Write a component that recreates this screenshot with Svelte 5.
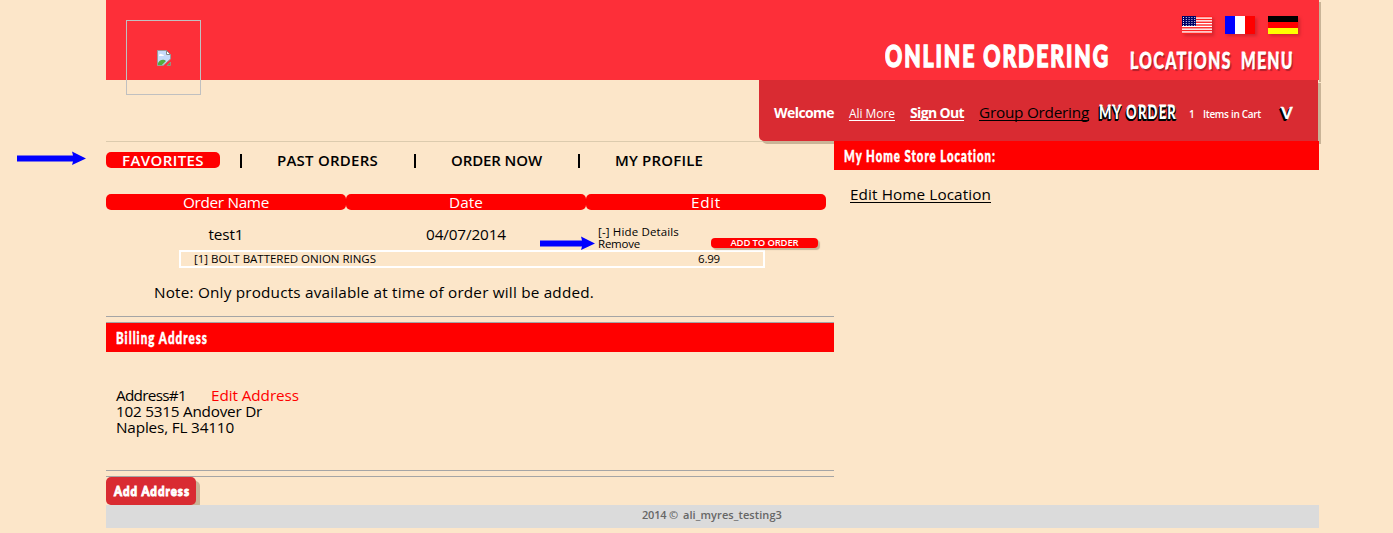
<script>
  // Tracks body text to a set measure by adjusting the letter spacing.
  function track(node, width) {
    const natural = node.getBoundingClientRect().width;
    node.style.letterSpacing = (width - natural) / node.textContent.length + 'px';
  }

  // Condenses display lettering horizontally to a set measure.
  function condense(node, width) {
    const natural = node.getBoundingClientRect().width;
    node.style.transform = `scaleX(${width / natural})`;
    node.style.marginRight = width - natural + 'px';
  }

  const stars = Array.from({ length: 25 }, (_, i) => ({
    x: 1 + (i % 5) * 2.8,
    y: 1 + Math.floor(i / 5) * 2
  }));
</script>

{#snippet arrow(length)}
  <svg width={length} height="14" viewBox="0 0 {length} 14">
    <path d="M0 4.500H{length - 13}L{length - 14} .5L{length} 7.500L{length - 14} 14L{length - 13} 10.500H0Z" fill="#00f" />
  </svg>
{/snippet}

<div class="page">
  <div class="pointer first">{@render arrow(69)}</div>
  <div class="pointer second">{@render arrow(55)}</div>

  <header>
    <div class="logo">
      <svg width="14" height="16" viewBox="0 0 14 16">
        <path d="M.5 .5H9.5L13.5 4.5V9L6 15.5H.5Z" fill="#c6dafb" stroke="#9a9a9a" />
        <path d="M2 6c0-2 2-3 3-1.5C7 4 7 6 6.500 6Z" fill="#fff" />
        <path d="M1 15v-2c2-4 6-4 8-2l-4 4Z" fill="#52ad3e" />
        <path d="M9.500 .5V4.500H13.500Z" fill="#fff" stroke="#888" />
        <path d="M10 15.500L13.500 12V15.500Z" fill="#52ad3e" stroke="#9a9a9a" stroke-width=".7" />
      </svg>
    </div>
    <div class="flags">
      <svg width="30" height="18" viewBox="0 0 30 18">
        <rect width="30" height="18" fill="#fff" />
        {#each [0, 1, 2, 3, 4, 5, 6] as n}
          <rect y={n * 2.77} width="30" height="1.4" fill="#f22" />
        {/each}
        <rect width="14" height="10" fill="#006" />
        {#each stars as s}
          <rect x={s.x} y={s.y} width="1" height="1" fill="#dde" />
        {/each}
      </svg>
      <svg width="30" height="18"><rect width="30" height="18" fill="#fff" /><rect width="10" height="18" fill="#00f" /><rect x="20" width="10" height="18" fill="red" /></svg>
      <svg width="30" height="18"><rect width="30" height="18" fill="red" /><rect width="30" height="6" fill="#000" /><rect y="12" width="30" height="6" fill="#ff0" /></svg>
    </div>
    <div class="main-nav">
      <span class="display ordering" use:condense={225}>ONLINE ORDERING</span>
      <span class="display section locations" use:condense={102}>LOCATIONS</span>
      <span class="display section" use:condense={53}>MENU</span>
    </div>
  </header>

  <div class="account-row">
    <div class="account">
      <b class="welcome"><span use:track={60}>Welcome</span></b>
      <u class="user"><span use:track={46}>Ali More</span></u>
      <u class="signout"><span use:track={54}>Sign Out</span></u>
      <u class="group"><span use:track={110}>Group Ordering</span></u>
      <span class="display my-order" use:condense={78}>MY ORDER</span>
      <span class="count">1</span>
      <span class="items" use:track={58}>Items in Cart</span>
      <span class="display toggle" use:condense={13}>V</span>
    </div>
  </div>

  <div class="columns">
    <main>
      <nav>
        <span class="active"><span use:track={82}>FAVORITES</span></span>
        <i></i>
        <span use:track={101}>PAST ORDERS</span>
        <i></i>
        <span use:track={91}>ORDER NOW</span>
        <i></i>
        <span use:track={88}>MY PROFILE</span>
      </nav>

      <div class="headings">
        <div><span use:track={86}>Order Name</span></div>
        <div><span use:track={34}>Date</span></div>
        <div><span use:track={30}>Edit</span></div>
      </div>

      <div class="order">
        <div class="cell"><span use:track={35}>test1</span></div>
        <div class="cell"><span use:track={80}>04/07/2014</span></div>
        <div class="edit">
          <div class="links">
            <span use:track={81}>[-] Hide Details</span>
            <span use:track={42}>Remove</span>
          </div>
          <div class="add"><span use:track={68}>ADD TO ORDER</span></div>
        </div>
      </div>

      <div class="detail">
        <span use:track={182}>[1] BOLT BATTERED ONION RINGS</span>
        <span use:track={22}>6.99</span>
      </div>

      <p class="note"><span use:track={440}>Note: Only products available at time of order will be added.</span></p>

      <div class="rules"></div>
      <h2><span class="display" use:condense={92}>Billing Address</span></h2>
      <div class="address">
        <div><span use:track={70}>Address#1</span><a use:track={88}>Edit Address</a></div>
        <div><span use:track={146}>102 5315 Andover Dr</span></div>
        <div><span use:track={118}>Naples, FL 34110</span></div>
      </div>
      <div class="rules"></div>
      <div class="add-address"><span class="display" use:condense={76}>Add Address</span></div>
    </main>

    <aside>
      <h2><span class="display" use:condense={152}>My Home Store Location:</span></h2>
      <u><span use:track={141}>Edit Home Location</span></u>
    </aside>
  </div>

  <footer><span use:track={36}>2014 ©</span><span use:track={99}>ali_myres_testing3</span></footer>
</div>

<style>
  :global(body) {
    background: #fce6c9;
    overflow: hidden;
  }
  .page {
    position: relative;
    width: 1213px;
    height: 533px;
    margin-left: 106px;
    font: 15.3px/16px 'Open Sans', sans-serif;
    color: #000;
  }
  span, a, b, u {
    white-space: nowrap;
  }
  span, a {
    display: inline-block;
  }
  u span {
    text-decoration: underline;
    text-decoration-thickness: 1px;
    text-underline-offset: 1.5px;
    text-decoration-skip-ink: none;
  }
  svg {
    display: block;
  }
  .display {
    font-family: Lato, sans-serif;
    font-weight: 900;
    letter-spacing: 0.09em;
    color: #fff;
    -webkit-text-stroke: 0.5px #fff;
    paint-order: stroke fill;
    transform-origin: left center;
  }
  .pointer {
    position: absolute;
    z-index: 3;
  }
  .first {
    left: -89px;
    top: 151px;
  }
  .second {
    left: 434px;
    top: 236px;
  }
  header {
    position: relative;
    height: 80px;
    box-sizing: border-box;
    padding: 16px 21px 0 0;
    background: #fd2f39;
    box-shadow: 2px 2px 0 #c9b497;
  }
  .logo {
    position: absolute;
    left: 20px;
    top: 20px;
    z-index: 2;
    width: 73px;
    height: 73px;
    border: 1px solid #c0c0c0;
    display: flex;
    align-items: center;
    justify-content: center;
  }
  .flags {
    display: flex;
    justify-content: flex-end;
    gap: 13px;
  }
  .flags svg {
    box-shadow: 2px 2px 3px rgba(130, 20, 30, 0.35);
  }
  .main-nav {
    display: flex;
    justify-content: flex-end;
    align-items: baseline;
    margin-right: 4px;
    line-height: 43px;
  }
  .ordering {
    font-size: 31px;
    -webkit-text-stroke-width: 1.5px;
  }
  .section {
    position: relative;
    top: 2px;
    font-size: 23px;
    -webkit-text-stroke-width: 1px;
    text-shadow: 2px 2px 1px #b3202b;
  }
  .locations {
    margin-left: 20px;
  }
  .section + .section {
    margin-left: 9px;
  }
  .account-row {
    position: relative;
    display: flex;
    justify-content: flex-end;
    height: 61px;
    padding-right: 1px;
    border-bottom: 1px solid #dccbae;
    margin-bottom: -1px;
    background: #fce6c9;
  }
  .account {
    box-sizing: border-box;
    width: 559px;
    height: 61px;
    padding: 25px 0 0 15px;
    display: flex;
    background: #d92b32;
    border-radius: 0 0 0 5px;
    box-shadow: 3px 3px 0 #c9b497;
    color: #fff;
  }
  .welcome, .signout {
    font-size: 14px;
    font-weight: 700;
  }
  .user {
    margin: 1px 15px 0;
    font-size: 12px;
  }
  .group {
    margin: -1px 10px 0 15px;
    color: #000;
  }
  .my-order {
    font-size: 18px;
    line-height: 14px;
    -webkit-text-stroke-width: 1px;
    text-shadow: -1px 1px #000, -2px 2px #000, 1px 1px #000, 0 2px #000;
  }
  .count, .items {
    margin-top: 1px;
    font-size: 10px;
    font-weight: 600;
  }
  .count {
    width: 14px;
    margin-left: 12px;
  }
  .toggle {
    margin-left: 20px;
    font-size: 17px;
    text-shadow: -1px 1px #000, -2px 2px #000;
  }
  .columns {
    position: relative;
    display: flex;
    height: 364px;
  }
  main {
    width: 728px;
  }
  aside {
    width: 485px;
  }
  aside u {
    display: inline-block;
    margin: 16px 0 0 16px;
  }
  nav {
    display: flex;
    margin-top: 11px;
    height: 16px;
    font-size: 15px;
    font-weight: 600;
  }
  .active {
    width: 98px;
    padding-left: 16px;
    border-radius: 5px;
    background: red;
    color: #fff;
  }
  nav > i {
    width: 2px;
    height: 14px;
    margin: 2px 35px 0 36px;
    background: #000;
  }
  .active + i {
    margin-left: 20px;
  }
  .headings {
    display: flex;
    margin-top: 26px;
    color: #fff;
  }
  .headings div {
    width: 240px;
    height: 16px;
    border-radius: 5px;
    background: red;
    text-align: center;
  }
  .order {
    display: flex;
    height: 40px;
  }
  .cell {
    width: 240px;
    padding-top: 16px;
    text-align: center;
  }
  .edit {
    display: flex;
    align-items: flex-start;
  }
  .links {
    display: flex;
    flex-direction: column;
    align-items: flex-start;
    width: 113px;
    padding: 16px 0 0 12px;
    font-size: 11.5px;
    line-height: 12px;
  }
  .add {
    width: 107px;
    height: 10px;
    margin-top: 28px;
    border-radius: 4px;
    background: red;
    box-shadow: 2px 2px 1px #c9b497;
    color: #fff;
    font-size: 9.5px;
    font-weight: 600;
    line-height: 10px;
    text-align: center;
  }
  .detail {
    box-sizing: border-box;
    display: flex;
    justify-content: space-between;
    width: 586px;
    height: 18px;
    margin-left: 73px;
    padding: 0 43px 0 13px;
    border: 2px solid #fff;
    font-size: 11.5px;
    line-height: 14px;
  }
  .note {
    margin: 16px 0 16px 48px;
  }
  .rules {
    height: 5px;
    border: solid #a5a5a5;
    border-width: 1px 0;
  }
  h2 {
    height: 29px;
    margin: 0;
    padding-left: 10px;
    background: red;
    font-size: 17px;
    line-height: 30px;
  }
  .address {
    height: 83px;
    padding: 35px 0 0 10px;
  }
  .address a {
    margin-left: 25px;
    color: red;
  }
  .add-address {
    box-sizing: border-box;
    width: 90px;
    height: 28px;
    padding-left: 8px;
    border-radius: 5px;
    background: #d92b32;
    box-shadow: 4px 4px 0 #c9b497;
    font-size: 14px;
    line-height: 28px;
  }
  .add-address .display {
    -webkit-text-stroke-width: 1px;
  }
  footer {
    position: relative;
    display: flex;
    gap: 5px;
    height: 23px;
    padding-left: 536px;
    background: #dbdbdb;
    color: #666;
    font-size: 11px;
    font-weight: 600;
    line-height: 20px;
  }
</style>
